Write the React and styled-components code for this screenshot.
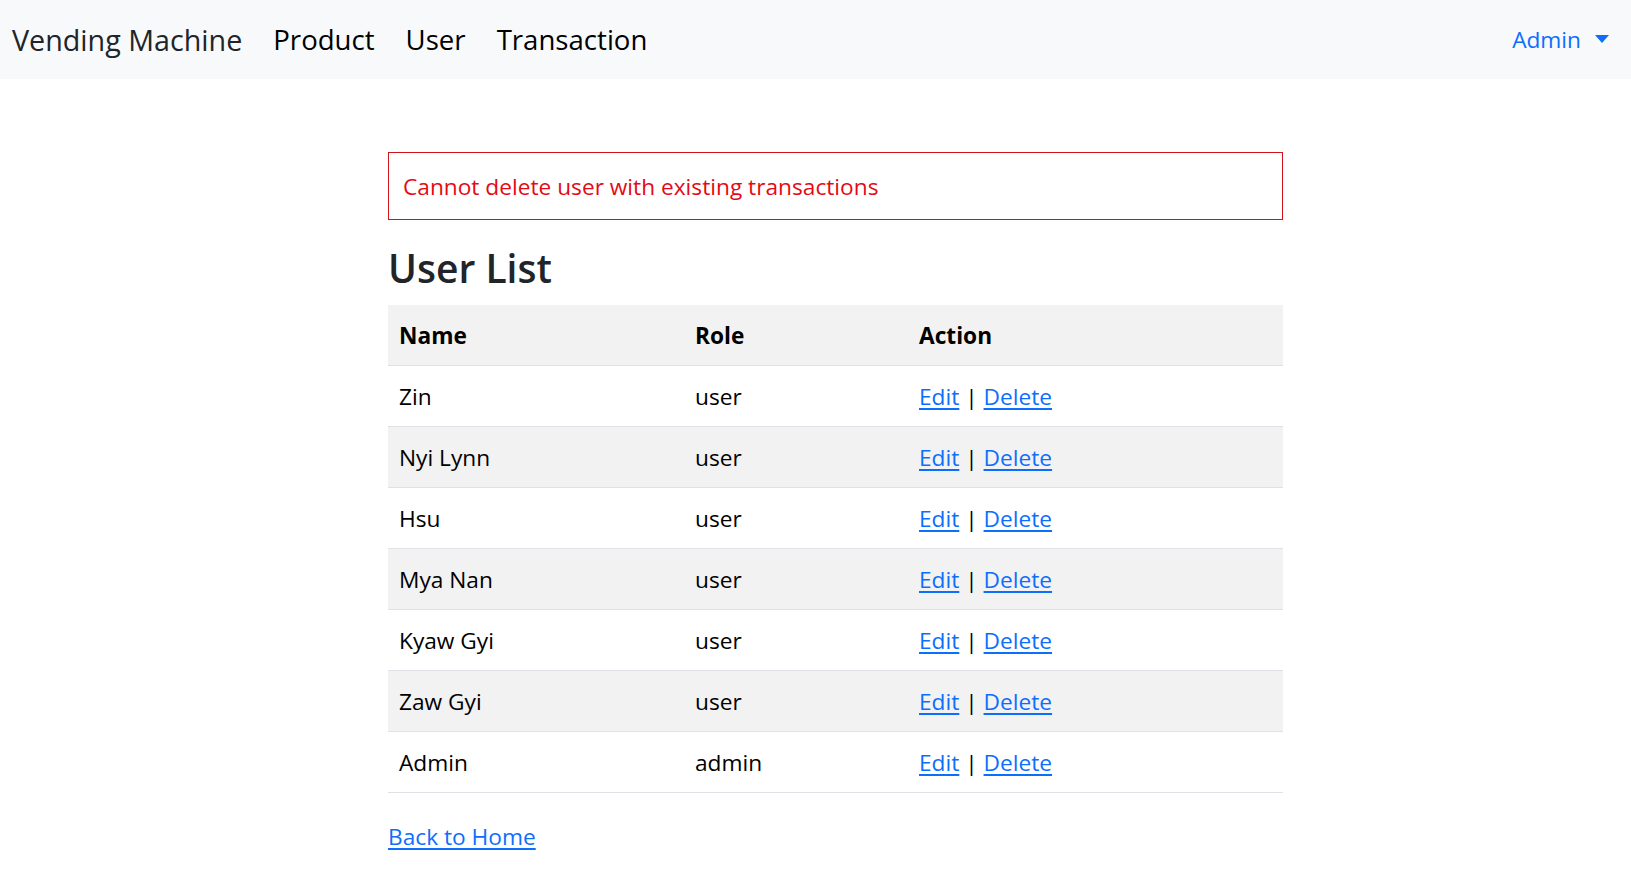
import styled, { createGlobalStyle } from "styled-components";

const GlobalStyle = createGlobalStyle`
  * {
    box-sizing: border-box;
  }
  body {
    margin: 0;
    font-family: "Open Sans", "Noto Sans", sans-serif;
    font-size: 22.7px;
    line-height: 36px;
    color: #212529;
    background: #fff;
  }
`;

const Navbar = styled.nav`
  display: flex;
  align-items: center;
  justify-content: space-between;
  height: 79px;
  padding: 0 22px 0 12px;
  background: #f8f9fa;
`;

const NavLeft = styled.div`
  display: flex;
  align-items: center;
  gap: 31px;
`;

const NavItem = styled.a`
  font-size: ${(p) => (p.$brand ? "28.7px" : "27.6px")};
  line-height: 45px;
  color: ${(p) => (p.$brand ? "#212529" : "#000")};
  text-decoration: none;
  cursor: pointer;
`;

const Dropdown = styled.a`
  display: flex;
  align-items: center;
  gap: 14px;
  font-size: 22.7px;
  color: #0d6efd;
  text-decoration: none;
  cursor: pointer;
`;

const Caret = styled.span`
  width: 0;
  height: 0;
  border-left: 7px solid transparent;
  border-right: 7px solid transparent;
  border-top: 8px solid #0d6efd;
  margin-top: -2px;
`;

const Main = styled.main`
  width: 895px;
  margin: 73px 0 0 388px;
`;

const Alert = styled.div`
  border: 1px solid #d0141c;
  color: #e50914;
  padding: 16px 14px 14px;
  line-height: 36px;
  margin-bottom: 23px;
`;

const Heading = styled.h3`
  font-size: 39px;
  font-weight: 600;
  line-height: 50px;
  margin: 0 0 12px;
`;

const Table = styled.table`
  width: 100%;
  border-collapse: collapse;
`;

const Row = styled.tr`
  background: ${(p) => (p.$shaded ? "#f2f2f2" : "#fff")};
  border-bottom: 1px solid #dee2e6;
`;

const HeadCell = styled.th`
  text-align: left;
  font-weight: 700;
  color: #000;
  padding: 13px 11px 11px;
  height: 60px;
  width: ${(p) => p.$w};
`;

const Cell = styled.td`
  padding: 13px 11px 11px;
  color: #000;
  height: 60px;
`;

const Link = styled.a`
  color: #0d6efd;
  text-decoration: underline;
  text-underline-offset: 3px;
  cursor: pointer;
`;

const BackLink = styled(Link)`
  display: inline-block;
  margin-top: 26px;
`;

const users = [
  { name: "Zin", role: "user" },
  { name: "Nyi Lynn", role: "user" },
  { name: "Hsu", role: "user" },
  { name: "Mya Nan", role: "user" },
  { name: "Kyaw Gyi", role: "user" },
  { name: "Zaw Gyi", role: "user" },
  { name: "Admin", role: "admin" },
];

export default function App() {
  return (
    <>
      <GlobalStyle />
      <Navbar>
        <NavLeft>
          <NavItem $brand>Vending Machine</NavItem>
          <NavItem>Product</NavItem>
          <NavItem>User</NavItem>
          <NavItem>Transaction</NavItem>
        </NavLeft>
        <Dropdown>
          Admin <Caret />
        </Dropdown>
      </Navbar>
      <Main>
        <Alert>Cannot delete user with existing transactions</Alert>
        <Heading>User List</Heading>
        <Table>
          <thead>
            <Row $shaded>
              <HeadCell $w="296px">Name</HeadCell>
              <HeadCell $w="224px">Role</HeadCell>
              <HeadCell>Action</HeadCell>
            </Row>
          </thead>
          <tbody>
            {users.map((u, i) => (
              <Row key={u.name} $shaded={i % 2 === 1}>
                <Cell>{u.name}</Cell>
                <Cell>{u.role}</Cell>
                <Cell>
                  <Link>Edit</Link> | <Link>Delete</Link>
                </Cell>
              </Row>
            ))}
          </tbody>
        </Table>
        <BackLink>Back to Home</BackLink>
      </Main>
    </>
  );
}
